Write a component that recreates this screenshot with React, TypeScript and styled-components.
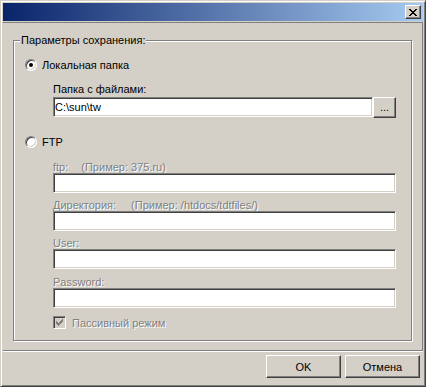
import React from 'react';
import styled, { createGlobalStyle } from 'styled-components';

const GlobalStyle = createGlobalStyle`
	html, body {
		margin: 0;
		padding: 0;
		background: #d4d0c8;
	}

	body {
		font-family: "Liberation Sans", Arial, sans-serif;
		font-size: 11px;
		color: #000;
	}

	* {
		box-sizing: border-box;
	}
`;

const Window = styled.div`
	width: 426px;
	height: 387px;
	display: flex;
	flex-direction: column;
	padding: 2px;
	background: #d4d0c8;
	border: 1px solid;
	border-color: #d4d0c8 #404040 #404040 #d4d0c8;
	box-shadow: inset 1px 1px 0 #fff, inset -1px -1px 0 #808080;
`;

const TitleBar = styled.div`
	flex: none;
	height: 18px;
	display: flex;
	align-items: center;
	justify-content: flex-end;
	padding: 0 2px;
	background: linear-gradient(to right, #0a246a, #a6caf0);
`;

const CloseButton = styled.div`
	width: 16px;
	height: 14px;
	display: flex;
	align-items: center;
	justify-content: center;
	background: #d4d0c8;
	border: 1px solid;
	border-color: #fff #404040 #404040 #fff;
	box-shadow: inset -1px -1px 0 #808080;

	svg {
		display: block;
		margin-right: 1px;
	}
`;

const Body = styled.div`
	flex: none;
	margin-top: 1px;
	padding: 17px 10px 9px 10px;
	border-top: 1px solid #808080;
	border-right: 1px solid #808080;
	border-bottom: 1px solid #808080;
	box-shadow: 0 1px 0 #fff;
`;

const GroupBox = styled.div`
	position: relative;
	display: flex;
	flex-direction: column;
	padding: 18px 15px 11px 11px;
	border: 1px solid #808080;
	box-shadow: inset 1px 1px 0 #fff, 1px 1px 0 #fff;
`;

const Caption = styled.span`
	position: absolute;
	top: -7px;
	left: 6px;
	padding: 0 1px;
	line-height: 13px;
	background: #d4d0c8;
`;

const OptionRow = styled.div<{ $top: number }>`
	display: flex;
	align-items: center;
	gap: 5px;
	height: 12px;
	line-height: 12px;
	margin-top: ${props => props.$top}px;
`;

const Radio = styled.span<{ $checked?: boolean }>`
	position: relative;
	flex: none;
	width: 12px;
	height: 12px;
	border-radius: 50%;
	background: #fff;
	border: 1px solid;
	border-color: #808080 #fff #fff #808080;
	box-shadow: inset 1px 1px 0 #404040, inset -1px -1px 0 #d4d0c8;

	&::after {
		content: '';
		display: ${props => (props.$checked ? 'block' : 'none')};
		position: absolute;
		left: 3px;
		top: 3px;
		width: 4px;
		height: 4px;
		border-radius: 50%;
		background: #000;
	}
`;

const Indent = styled.div<{ $top: number }>`
	display: flex;
	flex-direction: column;
	padding-left: 28px;
	margin-top: ${props => props.$top}px;
`;

const FieldLabel = styled.div<{ $disabled?: boolean }>`
	height: 11px;
	line-height: 11px;
	white-space: pre;
	color: ${props => (props.$disabled ? '#808080' : '#000')};
	text-shadow: ${props => (props.$disabled ? '1px 1px 0 #fff' : 'none')};
`;

const Hint = styled.span<{ $gap: number }>`
	margin-left: ${props => props.$gap}px;
`;

const TextBox = styled.div`
	flex: none;
	height: 20px;
	padding: 0 2px 0 1px;
	display: flex;
	align-items: center;
	background: #fff;
	border: 1px solid;
	border-color: #808080 #fff #fff #808080;
	box-shadow: inset 1px 1px 0 #404040, inset -1px -1px 0 #d4d0c8;
	white-space: pre;
`;

const PathBox = styled(TextBox)`
	flex: 1;
`;

const PathRow = styled.div`
	display: flex;
	align-items: flex-start;
	margin-top: 2px;
`;

const Field = styled.div<{ $top: number }>`
	display: flex;
	flex-direction: column;
	margin-top: ${props => props.$top}px;
`;

const RaisedButton = styled.div`
	display: flex;
	align-items: center;
	justify-content: center;
	background: #d4d0c8;
	border: 1px solid;
	border-color: #fff #404040 #404040 #fff;
	box-shadow: inset -1px -1px 0 #808080;
`;

const BrowseButton = styled(RaisedButton)`
	flex: none;
	width: 23px;
	height: 21px;
	padding-bottom: 2px;
`;

const CheckRow = styled.div`
	display: flex;
	align-items: center;
	gap: 6px;
	height: 13px;
	margin-top: 8px;
	color: #808080;
	text-shadow: 1px 1px 0 #fff;
`;

const CheckBox = styled.span`
	flex: none;
	width: 13px;
	height: 13px;
	display: flex;
	align-items: center;
	justify-content: center;
	background: #d4d0c8;
	border: 1px solid;
	border-color: #808080 #fff #fff #808080;
	box-shadow: inset 1px 1px 0 #404040, inset -1px -1px 0 #d4d0c8;

	svg {
		display: block;
	}
`;

const ButtonBar = styled.div`
	flex: 1;
	display: flex;
	justify-content: flex-end;
	align-items: flex-start;
	gap: 4px;
	padding: 4px 3px 0 0;
`;

const DialogButton = styled(RaisedButton)`
	width: 75px;
	height: 23px;
`;

const PixelIcon = ({ rows, color }: { rows: string[]; color: string }) => (
	<svg width={rows[0].length} height={rows.length} shapeRendering="crispEdges">
		{rows.map((row, y) =>
			row.split('').map((cell, x) =>
				cell === 'X' ? <rect key={`${x}-${y}`} x={x} y={y} width={1} height={1} fill={color} /> : null
			)
		)}
	</svg>
);

const closeGlyph = [
	'XX....XX',
	'.XX..XX.',
	'..XXXX..',
	'...XX...',
	'..XXXX..',
	'.XX..XX.',
	'XX....XX',
];

const checkGlyph = [
	'......X',
	'.....XX',
	'X...XXX',
	'XX.XXX.',
	'XXXXX..',
	'.XXX...',
	'..X....',
];

const ftpFields = [
	{ label: 'ftp:', hint: '(Пример: 375.ru)', gap: 13, top: 14 },
	{ label: 'Директория:', hint: '(Пример: /htdocs/tdtfiles/)', gap: 15, top: 7 },
	{ label: 'User:', top: 7 },
	{ label: 'Password:', top: 8 },
];

const App = () => {
	return (
		<>
			<GlobalStyle />
			<Window>
				<TitleBar>
					<CloseButton>
						<PixelIcon rows={closeGlyph} color="#000" />
					</CloseButton>
				</TitleBar>
				<Body>
					<GroupBox>
						<Caption>Параметры сохранения:</Caption>
						<OptionRow $top={0}>
							<Radio $checked />
							<span>Локальная папка</span>
						</OptionRow>
						<Indent $top={13}>
							<FieldLabel>Папка с файлами:</FieldLabel>
							<PathRow>
								<PathBox>C:\sun\tw</PathBox>
								<BrowseButton>...</BrowseButton>
							</PathRow>
						</Indent>
						<OptionRow $top={18}>
							<Radio />
							<span>FTP</span>
						</OptionRow>
						<Indent $top={0}>
							{ftpFields.map(field => (
								<Field key={field.label} $top={field.top}>
									<FieldLabel $disabled>
										{field.label}
										{field.hint && <Hint $gap={field.gap}>{field.hint}</Hint>}
									</FieldLabel>
									<TextBox />
								</Field>
							))}
							<CheckRow>
								<CheckBox>
									<PixelIcon rows={checkGlyph} color="#808080" />
								</CheckBox>
								<span>Пассивный режим</span>
							</CheckRow>
						</Indent>
					</GroupBox>
				</Body>
				<ButtonBar>
					<DialogButton>OK</DialogButton>
					<DialogButton>Отмена</DialogButton>
				</ButtonBar>
			</Window>
		</>
	);
};

export default App;
